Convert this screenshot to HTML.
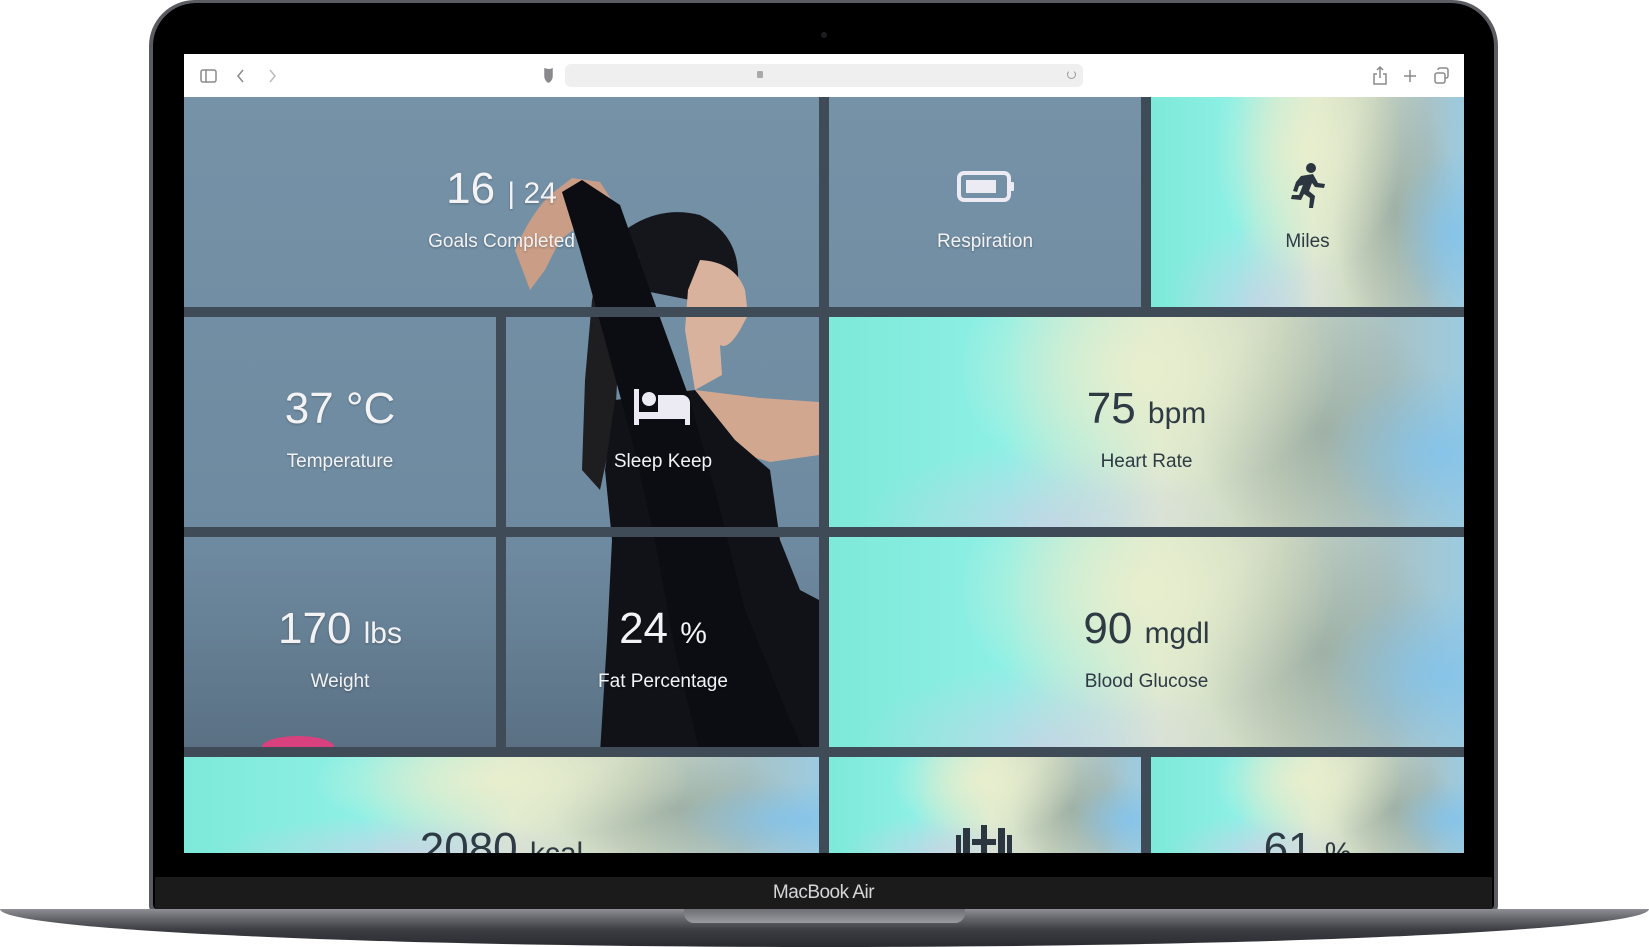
<!DOCTYPE html>
<html><head><meta charset="utf-8"><style>
*{margin:0;padding:0;box-sizing:border-box}
body{width:1649px;height:947px;overflow:hidden;background:#fff;position:relative;font-family:"Liberation Sans",sans-serif}
.abs{position:absolute}
.tile{position:absolute;text-align:center;color:#f3f3f6;overflow:hidden}
.val{position:absolute;left:0;right:0;top:64px;font-size:44px;font-weight:300;line-height:56px;text-shadow:0 1px 2px rgba(0,0,0,.25)}
.val small{font-size:30px}
.lab{position:absolute;left:0;right:0;top:132px;font-size:19px;line-height:26px;text-shadow:0 1px 2px rgba(0,0,0,.3)}
.dark{color:#2e3a44}
.dark .val,.dark .lab{text-shadow:none}
.grad{background:
 radial-gradient(ellipse 30% 60% at 50% 25%,rgba(232,238,205,.95),rgba(232,238,205,0)),
 radial-gradient(ellipse 18% 40% at 96% 65%,rgba(130,195,235,.85),rgba(130,195,235,0)),
 radial-gradient(ellipse 30% 40% at 35% 100%,rgba(205,205,230,.7),rgba(205,205,230,0)),
 radial-gradient(ellipse 20% 60% at 78% 55%,rgba(140,160,150,.6),rgba(140,160,150,0)),
 linear-gradient(90deg,#7ee9d8 0%,#8ef0e6 28%,#dfead0 52%,#c7d2be 72%,#a9c2c4 88%,#9ccbe0 100%)}
</style></head><body>
<div class="abs" style="left:149px;top:0;width:1349px;height:912px;border-radius:46px 46px 6px 6px;background:#5b5c61"></div>
<div class="abs" style="left:153px;top:3px;width:1341px;height:906px;border-radius:43px 43px 4px 4px;background:#000"></div>
<div class="abs" style="left:821px;top:32px;width:6px;height:6px;border-radius:50%;background:#1c1c22"></div>
<div class="abs" style="left:155px;top:877px;width:1337px;height:32px;background:#1b1b1c;color:#d6d6d8;font-size:19px;text-align:center;line-height:32px;letter-spacing:-.5px">MacBook Air</div>
<div class="abs" style="left:0;top:909px;width:1649px;height:38px;border-radius:0 0 50% 50%/0 0 100% 100%;background:linear-gradient(#8e8f94 0,#6a6b70 22%,#3c3d42 55%,#2a2b30 100%)"></div>
<div class="abs" style="left:684px;top:909px;width:281px;height:14px;border-radius:0 0 10px 10px;background:linear-gradient(#6e6f74,#9a9ba0)"></div>

<div class="abs" style="left:184px;top:54px;width:1280px;height:43px;background:#fff"></div>
<svg class="abs" style="left:184px;top:54px" width="1280" height="43" viewBox="0 0 1280 43" fill="none" stroke="#8a8a8e" stroke-width="1.5">
 <rect x="17" y="16" width="15" height="12" rx="2"/><line x1="22" y1="16" x2="22" y2="28"/>
 <path d="M59 16l-5 6 5 6"/><path d="M86 16l5 6-5 6" stroke="#bbb"/>
 <path d="M361 15c3 1 5 1 7 0v7c0 4-3 6-3.5 6s-3.5-2-3.5-6z" fill="#8a8a8e"/>
 <path d="M1193 20h-3v10h12v-10h-3M1196 24v-11M1193 16l3-3 3 3"/>
 <path d="M1220 22h12M1226 16v12"/>
 <rect x="1251" y="19" width="10" height="10" rx="2"/><path d="M1254 16v-0a2 2 0 0 1 2-2h6a2 2 0 0 1 2 2v6a2 2 0 0 1-2 2h-1"/>
</svg>
<div class="abs" style="left:565px;top:64px;width:518px;height:23px;border-radius:6px;background:#efeff0"></div>
<div class="abs" style="left:757px;top:71px;width:6px;height:7px;border-radius:1px;background:#aaa"></div>
<div class="abs" style="left:1067px;top:70px;width:9px;height:9px;border:1.5px solid #999;border-radius:50%;border-top-color:transparent"></div>

<div class="abs" style="left:184px;top:97px;width:1280px;height:756px;overflow:hidden;background:linear-gradient(180deg,#7592a7 0%,#6e8aa0 60%,#5b7285 85%,#4b5f70 100%)">
 <svg class="abs" style="left:0;top:0" width="1280" height="756" viewBox="184 97 1280 756">
  <path d="M515 250 Q530 215 550 195 L572 178 L600 182 L615 205 L600 220 L580 225 L560 240 L545 270 L530 290 Z" fill="#c99d86"/>
  <path d="M625 230 Q660 205 700 215 Q740 235 738 280 L690 300 L640 290 Z" fill="#15161c"/>
  <path d="M600 260 L640 255 L620 330 L615 420 L600 490 L582 470 L585 380 L592 300 Z" fill="#1e1d20"/>
  <path d="M700 260 Q735 262 745 290 L748 315 L740 330 Q728 350 720 345 L722 375 L695 390 L685 330 L688 290 Z" fill="#d8b29c"/>
  <path d="M695 390 L760 398 L819 402 L819 455 L770 462 L735 452 L705 430 Z" fill="#d2a78f"/>
  <path d="M615 400 L695 390 L735 440 L770 470 L780 540 L800 590 L819 600 L819 753 L600 753 L607 640 L612 540 L605 470 Z" fill="#101218"/>
  <path d="M562 192 L582 180 L620 205 L650 290 L690 400 L715 490 L745 610 L790 720 L805 753 L700 753 L675 650 L655 540 L632 440 L605 340 L580 250 Z" fill="#0c0d13"/>
  <ellipse cx="298" cy="747" rx="36" ry="11" fill="#d8407e"/>
 </svg>
 <div class="abs" style="left:0;top:210px;width:1280px;height:10px;background:#3f4c58"></div>
 <div class="abs" style="left:0;top:430px;width:1280px;height:10px;background:#3f4c58"></div>
 <div class="abs" style="left:0;top:650px;width:1280px;height:10px;background:#3f4c58"></div>
 <div class="abs" style="left:635px;top:0;width:10px;height:756px;background:#3f4c58"></div>
 <div class="abs" style="left:957px;top:0;width:10px;height:210px;background:#3f4c58"></div>
 <div class="abs" style="left:957px;top:660px;width:10px;height:100px;background:#3f4c58"></div>
 <div class="abs" style="left:312px;top:220px;width:10px;height:430px;background:#3f4c58"></div>
</div>

<div class="tile" style="left:184px;top:97px;width:635px;height:210px"><div class="val">16 <small>| 24</small></div><div class="lab">Goals Completed</div></div>
<div class="tile" style="left:829px;top:97px;width:312px;height:210px">
 <svg class="abs" style="left:128px;top:74px" width="58" height="32" viewBox="0 0 58 32"><rect x="2" y="2" width="50" height="27" rx="5" fill="none" stroke="#eceaf2" stroke-width="4"/><rect x="9" y="9" width="30" height="13" fill="#eceaf2"/><rect x="53" y="11" width="4" height="9" rx="1" fill="#eceaf2"/></svg>
 <div class="lab">Respiration</div></div>
<div class="tile" style="left:184px;top:317px;width:312px;height:210px"><div class="val">37 <small style="font-size:44px">°C</small></div><div class="lab">Temperature</div></div>
<div class="tile" style="left:507px;top:317px;width:312px;height:210px">
 <svg class="abs" style="left:127px;top:72px" width="58" height="36" viewBox="0 0 58 36" fill="#eceaf2"><rect x="0" y="0" width="5" height="36"/><circle cx="15" cy="10" r="7"/><path d="M24 6h24a8 8 0 0 1 8 8v22h-5v-6H5v-7h19z"/></svg>
 <div class="lab">Sleep Keep</div></div>
<div class="tile" style="left:184px;top:537px;width:312px;height:210px"><div class="val">170 <small>lbs</small></div><div class="lab">Weight</div></div>
<div class="tile" style="left:507px;top:537px;width:312px;height:210px"><div class="val">24 <small>%</small></div><div class="lab">Fat Percentage</div></div>

<div class="tile grad dark" style="left:1151px;top:97px;width:313px;height:210px">
 <svg class="abs" style="left:136px;top:66px" width="40" height="46" viewBox="0 0 40 46" fill="#2b3640"><circle cx="24" cy="5" r="5"/><path d="M14 13l12-2 5 9 7 1-1 4-9-1-3-4-3 8 6 5-2 12h-4l1-10-6-4-3 6-10-1 1-4 7 0 4-10-4 1-2 6-4-1 3-9z"/></svg>
 <div class="lab">Miles</div></div>
<div class="tile grad dark" style="left:829px;top:317px;width:635px;height:210px"><div class="val">75 <small>bpm</small></div><div class="lab">Heart Rate</div></div>
<div class="tile grad dark" style="left:829px;top:537px;width:635px;height:210px"><div class="val">90 <small>mgdl</small></div><div class="lab">Blood Glucose</div></div>
<div class="tile grad dark" style="left:184px;top:757px;width:635px;height:96px"><div class="val">2080 <small>kcal</small></div></div>
<div class="tile grad dark" style="left:829px;top:757px;width:312px;height:96px">
 <svg class="abs" style="left:127px;top:68px" width="56" height="30" viewBox="0 0 56 30" fill="#2b3640"><rect x="0" y="10" width="5" height="20"/><rect x="7" y="3" width="7" height="27"/><rect x="16" y="14" width="24" height="6"/><rect x="42" y="3" width="7" height="27"/><rect x="51" y="10" width="5" height="20"/><rect x="25" y="0" width="6" height="30"/></svg>
</div>
<div class="tile grad dark" style="left:1151px;top:757px;width:313px;height:96px"><div class="val">61 <small>%</small></div></div>
</body></html>
